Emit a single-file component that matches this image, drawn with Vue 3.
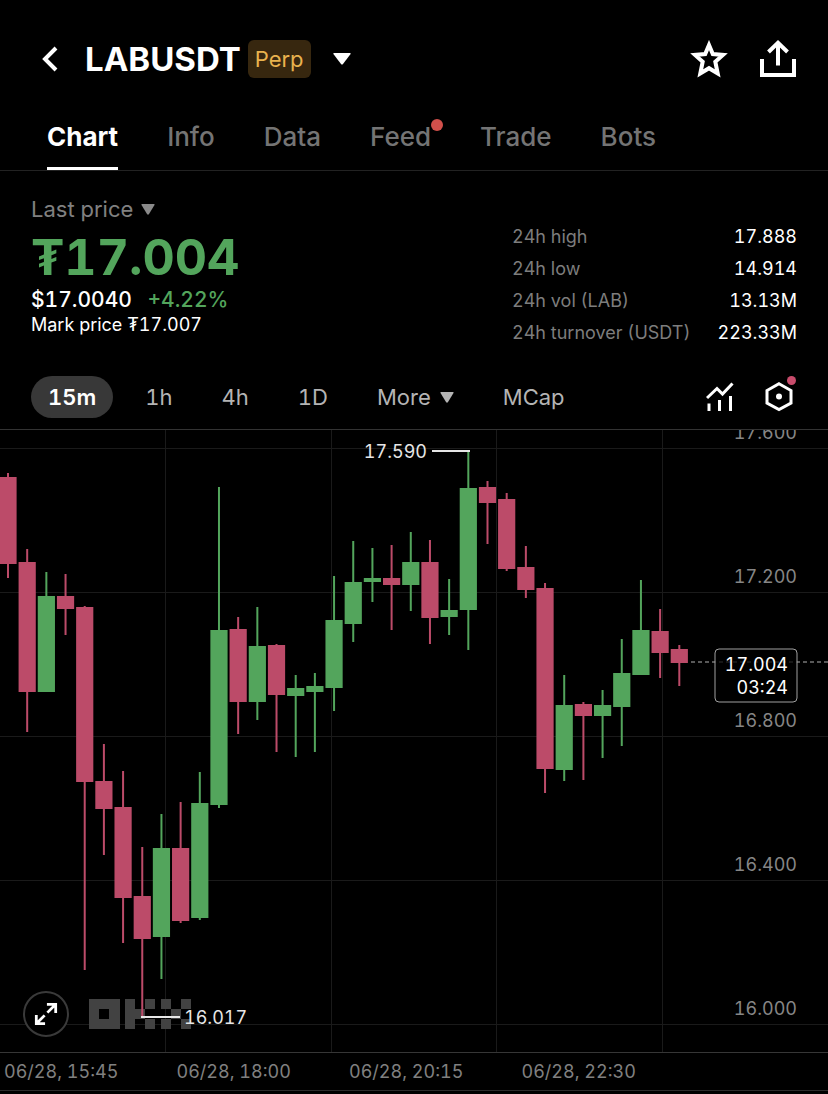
<script setup>
import { ref } from 'vue';

const tabs = [
    { name: 'Chart' },
    { name: 'Info' },
    { name: 'Data' },
    { name: 'Feed', dot: true },
    { name: 'Trade' },
    { name: 'Bots' }
];
const activeTab = ref('Chart');

const stats = [
    { label: '24h high', value: '17.888' },
    { label: '24h low', value: '14.914' },
    { label: '24h vol (LAB)', value: '13.13M' },
    { label: '24h turnover (USDT)', value: '223.33M' }
];

const intervals = ['15m', '1h', '4h', '1D', 'More', 'MCap'];
const activeInterval = ref('15m');

const times = ['06/28, 15:45', '06/28, 18:00', '06/28, 20:15', '06/28, 22:30'];

// horizontal grid lines with their price
const levels = [
    { y: 18, price: '17.600' },
    { y: 162, price: '17.200' },
    { y: 306, price: '16.800' },
    { y: 450, price: '16.400' },
    { y: 594, price: '16.000' }
];
const columns = [165, 331, 496, 662];

// [high, body top, body bottom, low, rising] in plot units
const bars = [
    [43, 47, 134, 148, 0],
    [119, 132, 262, 302, 0],
    [142, 166, 262, 262, 1],
    [144, 166, 179, 205, 0],
    [176, 177, 352, 540, 0],
    [314, 351, 379, 425, 0],
    [341, 377, 468, 513, 0],
    [417, 466, 509, 587, 0],
    [384, 418, 507, 549, 1],
    [372, 418, 491, 493, 0],
    [342, 373, 488, 490, 1],
    [57, 200, 375, 378, 1],
    [187, 199, 272, 304, 0],
    [177, 216, 272, 290, 1],
    [214, 215, 265, 322, 0],
    [245, 258, 266, 327, 1],
    [243, 256, 262, 322, 1],
    [146, 190, 258, 281, 1],
    [111, 152, 194, 212, 1],
    [118, 148, 152, 172, 1],
    [115, 148, 155, 200, 0],
    [102, 132, 155, 181, 1],
    [110, 132, 188, 214, 0],
    [149, 180, 187, 205, 1],
    [21, 58, 180, 220, 1],
    [51, 57, 73, 114, 0],
    [63, 69, 139, 141, 0],
    [116, 137, 160, 168, 0],
    [153, 158, 339, 363, 0],
    [245, 275, 340, 351, 1],
    [272, 274, 286, 350, 0],
    [260, 275, 286, 328, 1],
    [209, 243, 277, 316, 1],
    [150, 200, 245, 245, 1],
    [179, 201, 223, 248, 0],
    [215, 219, 233, 256, 0]
];

const step = 19.18;
const candles = bars.map(([high, top, bottom, low, up], i) => ({
    x: 8 + i * step,
    high,
    top,
    bottom,
    low,
    kind: up ? 'up' : 'down'
}));
</script>

<template>
  <div class="screen">
    <header class="topbar">
      <button class="icon-btn back" aria-label="Back">
        <svg width="18" height="28" viewBox="0 0 18 28">
          <path d="M15 3 4 14l11 11" fill="none" stroke="#fff" stroke-width="4" />
        </svg>
      </button>
      <h1>LABUSDT</h1>
      <span class="badge">Perp</span>
      <button class="icon-btn pair" aria-label="Choose pair">
        <svg width="18" height="12" viewBox="0 0 18 12">
          <path d="M1 0h16q1 0 .6 1L10 11q-1 1-2 0L.4 1Q0 0 1 0z" fill="#fff" />
        </svg>
      </button>
      <div class="actions">
        <button class="icon-btn" aria-label="Add to favorites">
          <svg width="38" height="38" viewBox="0 0 38 38">
            <path d="M19 5 22.800 14 33 14.900 25.300 21.700 27.700 33.500 19 28.200 10.300 33.500 12.700 21.700 5 14.900 15.200 14z" fill="none" stroke="#fff" stroke-width="4" />
          </svg>
        </button>
        <button class="icon-btn" aria-label="Share">
          <svg width="38" height="38" viewBox="0 0 38 38" fill="none" stroke="#fff" stroke-width="4">
            <path d="M3 19v16h32V19" />
            <path d="M19 25.500V3M9.500 12 19 2.800 28.500 12" />
          </svg>
        </button>
      </div>
    </header>

    <nav class="tabs">
      <button
        v-for="tab in tabs"
        :key="tab.name"
        :class="{ active: tab.name === activeTab }"
        @click="activeTab = tab.name"
      >
        {{ tab.name }}
        <span v-if="tab.dot" class="dot"></span>
      </button>
    </nav>

    <section class="summary">
      <div class="price">
        <button class="price-type">
          Last price
          <svg width="14" height="12" viewBox="0 0 14 12">
            <path d="M1 1h12q1 0 .5 1L8 11q-1 1.500-2 0L.5 2Q0 1 1 1z" fill="#8a8a8a" />
          </svg>
        </button>
        <div class="last">₮17.004</div>
        <div class="fiat">$17.0040 <span>+4.22%</span></div>
        <div class="mark">Mark price ₮17.007</div>
      </div>
      <dl class="stats">
        <div v-for="stat in stats" :key="stat.label">
          <dt>{{ stat.label }}</dt>
          <dd>{{ stat.value }}</dd>
        </div>
      </dl>
    </section>

    <div class="intervals">
      <button
        v-for="item in intervals"
        :key="item"
        class="interval"
        :class="{ active: item === activeInterval }"
        @click="activeInterval = item"
      >
        {{ item }}
        <svg v-if="item === 'More'" width="14" height="12" viewBox="0 0 14 12">
          <path d="M1 1h12q1 0 .5 1L8 11q-1 1.500-2 0L.5 2Q0 1 1 1z" fill="#b4b4b4" />
        </svg>
      </button>
      <div class="tools">
        <button class="icon-btn" aria-label="Indicators">
          <svg width="28" height="30" viewBox="0 0 28 30" fill="none" stroke="#fff" stroke-width="3">
            <path d="M1 16 11 6.500l5.500 5.500L26.500 1.500" />
            <path d="M3 21.500v7.500M13.500 18v11M24.500 14v15" />
          </svg>
        </button>
        <button class="icon-btn" aria-label="Chart settings">
          <svg width="28" height="30" viewBox="0 0 28 30">
            <path d="M14 1.700 26 8.500v12.500L14 27.500 2 21V8.500z" fill="none" stroke="#fff" stroke-width="3" />
            <circle cx="14" cy="14.500" r="3" fill="#fff" />
          </svg>
          <span class="dot"></span>
        </button>
      </div>
    </div>

    <section class="chart">
      <svg class="plot" viewBox="0 0 828 622">
        <g class="grid">
          <path v-for="level in levels" :key="level.y" :d="`M0 ${level.y}H828`" />
          <path v-for="x in columns" :key="x" :d="`M${x} 0V622`" />
        </g>

        <path
          class="watermark"
          fill-rule="evenodd"
          d="M89 569h31v30h-31zM99 579v10h10v-10zM125 569h10v10h10v10h-10v10h-10zM145 569h10v10h-10zM145 589h10v10h-10zM161 569h10v10h-10zM161 589h10v10h-10zM171 579h10v10h-10zM181 569h10v10h-10zM181 589h10v10h-10z"
        />

        <g v-for="c in candles" :key="c.x" :class="c.kind">
          <rect :x="c.x - 1" :y="c.high" width="2" :height="c.low - c.high" />
          <rect :x="c.x - 8.6" :y="c.top" width="17.2" :height="c.bottom - c.top" />
        </g>

        <g class="extreme">
          <path d="M432 21h38M141 587h39" />
          <text x="427" y="28" text-anchor="end">17.590</text>
          <text x="184" y="594">16.017</text>
        </g>

        <g class="axis">
          <text v-for="level in levels" :key="level.y" x="797" :y="level.y - 9" text-anchor="end">{{ level.price }}</text>
        </g>

        <g class="current">
          <path d="M691 232H828" />
          <rect x="715" y="219" width="82" height="53" rx="4" />
          <text x="788" y="241" text-anchor="end">17.004</text>
          <text x="788" y="264" text-anchor="end">03:24</text>
        </g>
      </svg>
      <button class="expand" aria-label="Full screen">
        <svg width="24" height="24" viewBox="0 0 26 26" fill="none" stroke="#fff" stroke-width="3">
          <path d="M14 2.500h9.500V12M23.500 2.500 14.500 11.500" />
          <path d="M12 23.500H2.500V14M2.500 23.500 11.500 14.500" />
        </svg>
      </button>
    </section>

    <div class="times">
      <span v-for="time in times" :key="time">{{ time }}</span>
    </div>
  </div>
</template>

<style>
body {
    margin: 0;
    background: #000;
}
</style>

<style scoped>
.screen {
    background: #000;
    color: #fff;
    font-family: Inter, "Liberation Sans", sans-serif;
    font-feature-settings: "tnum";
}

button {
    padding: 0;
    border: none;
    background: none;
    color: inherit;
    font: inherit;
    font-feature-settings: inherit;
    cursor: pointer;
}

svg {
    display: block;
}

.icon-btn {
    position: relative;
    display: flex;
}

.topbar {
    display: flex;
    align-items: center;
    padding: 40px 31px 0 41px;
}

h1 {
    margin: 0 7px 0 26px;
    font-size: 33px;
    line-height: 38px;
    font-weight: 700;
}

.badge {
    padding: 0 7px;
    border-radius: 6px;
    background: #37270f;
    color: #e9b24e;
    font-size: 22px;
    line-height: 38px;
}

.pair {
    margin-left: 22px;
}

.actions {
    display: flex;
    gap: 31px;
    margin-left: auto;
}

.tabs {
    display: flex;
    gap: 49px;
    margin-top: 43px;
    padding: 0 47px;
    border-bottom: 1px solid #222;
}

.tabs button {
    position: relative;
    padding-bottom: 14px;
    border-bottom: 3px solid transparent;
    color: #747474;
    font-size: 26px;
    line-height: 32px;
    font-weight: 500;
}

.tabs .active {
    border-color: #fff;
    color: #fff;
    font-weight: 700;
}

.dot {
    position: absolute;
    border-radius: 50%;
}

.tabs .dot {
    top: -2px;
    right: -12px;
    width: 12px;
    height: 12px;
    background: #d2504b;
}

.summary {
    display: flex;
    justify-content: space-between;
    padding: 24px 31px 0;
}

.price-type {
    display: flex;
    align-items: center;
    gap: 8px;
    color: #808080;
    font-size: 22px;
    line-height: 28px;
}

.last {
    color: #53a55c;
    font-size: 50px;
    line-height: 68px;
    font-weight: 700;
}

.fiat {
    font-size: 21px;
    line-height: 18px;
    font-weight: 500;
}

.fiat span {
    margin-left: 10px;
    color: #53a55c;
}

.mark {
    font-size: 18px;
    line-height: 32px;
}

.stats {
    width: 285px;
    margin: 26px 0 0;
    font-size: 18px;
    line-height: 32px;
}

.stats div {
    display: flex;
    justify-content: space-between;
}

dt {
    color: #7d7d7d;
}

dd {
    margin: 0;
}

.intervals {
    display: flex;
    align-items: center;
    gap: 15px;
    padding: 27px 31px 11px;
    border-bottom: 1px solid #333;
}

.interval {
    display: flex;
    align-items: center;
    gap: 9px;
    padding: 0 17px;
    border-radius: 21px;
    color: #b4b4b4;
    font-size: 22px;
    line-height: 42px;
}

.interval.active {
    background: #383838;
    color: #fff;
    font-weight: 600;
}

.tools {
    display: flex;
    gap: 31px;
    margin-left: auto;
    padding-right: 4px;
}

.tools .dot {
    top: -6px;
    right: -3px;
    width: 9px;
    height: 9px;
    background: #c84c6c;
}

.chart {
    position: relative;
    border-bottom: 1px solid #363636;
}

.plot {
    width: 100%;
    height: auto;
    font-size: 18px;
}

.grid {
    stroke: #1a1a1a;
    shape-rendering: crispEdges;
}

.watermark {
    fill: #424242;
}

.up {
    fill: #53a55c;
}

.down {
    fill: #bc4b69;
}

.extreme {
    fill: #e6e6e6;
}

.extreme path {
    stroke: #e6e6e6;
    stroke-width: 2;
}

.axis {
    fill: #868686;
}

.current {
    fill: #fff;
}

.current path {
    stroke: #b0b0b0;
    stroke-dasharray: 4 3;
}

.current rect {
    fill: rgba(0, 0, 0, 0.75);
    stroke: #a0a0a0;
}

.expand {
    position: absolute;
    left: 23px;
    bottom: 15px;
    display: flex;
    align-items: center;
    justify-content: center;
    width: 46px;
    height: 46px;
    border: 2px solid #3a3a3a;
    border-radius: 50%;
    background: #000;
}

.times {
    display: grid;
    grid-template-columns: repeat(4, 1fr);
    padding: 0 134px 0 4px;
    border-bottom: 1px solid #2c2c2c;
    color: #808080;
    font-size: 18px;
    line-height: 37px;
}
</style>
